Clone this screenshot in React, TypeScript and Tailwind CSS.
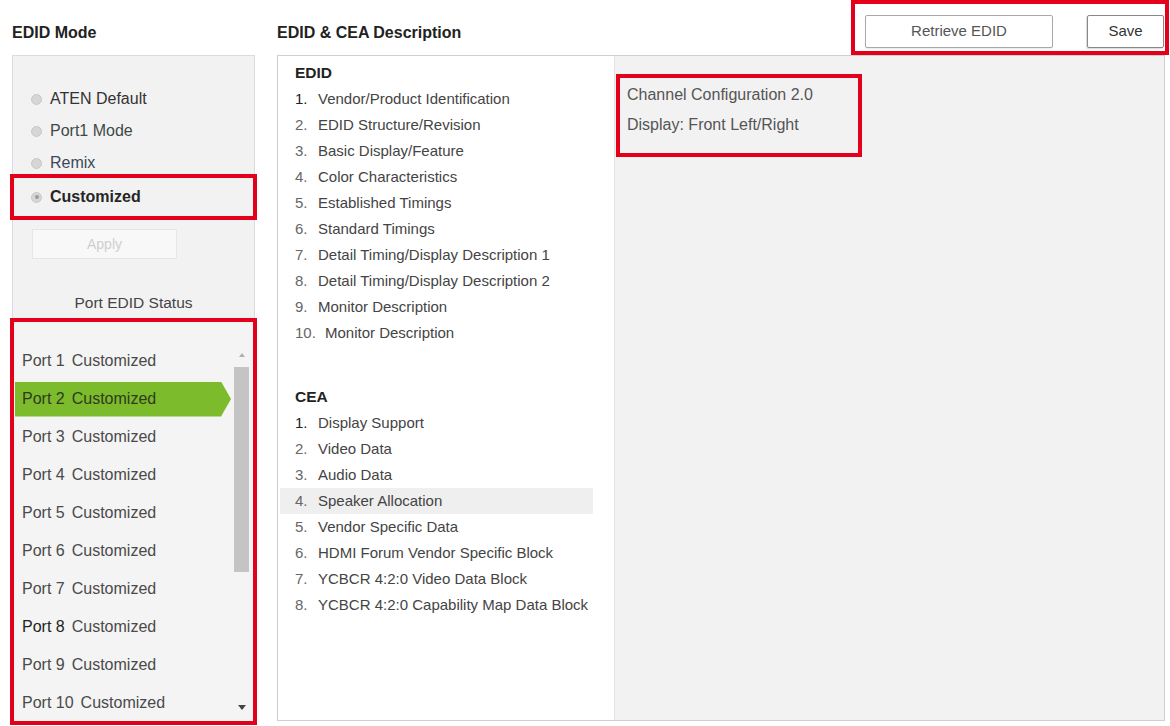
import React from "react";

const edidItems = [
  "Vendor/Product Identification",
  "EDID Structure/Revision",
  "Basic Display/Feature",
  "Color Characteristics",
  "Established Timings",
  "Standard Timings",
  "Detail Timing/Display Description 1",
  "Detail Timing/Display Description 2",
  "Monitor Description",
  "Monitor Description",
];

const ceaItems = [
  "Display Support",
  "Video Data",
  "Audio Data",
  "Speaker Allocation",
  "Vendor Specific Data",
  "HDMI Forum Vendor Specific Block",
  "YCBCR 4:2:0 Video Data Block",
  "YCBCR 4:2:0 Capability Map Data Block",
];

function Radio({ checked }: { checked?: boolean }) {
  return (
    <span className="w-[11px] h-[11px] rounded-full bg-[#d6d6d6] border border-[#c8c8c8] flex items-center justify-center mr-[8px] shrink-0">
      {checked ? <span className="w-[4px] h-[4px] rounded-full bg-[#9a9a9a]" /> : null}
    </span>
  );
}

function ListRow({ n, text, highlight, first }: { n: number; text: string; highlight?: boolean; first?: boolean }) {
  return (
    <div className={`h-[26px] flex items-center ml-[2px] w-[313px] pl-[15px] ${highlight ? "bg-[#efefef]" : ""}`}>
      <span className={`w-[23px] shrink-0 ${first ? "text-[#222]" : "text-[#666]"}`}>{n}.</span>
      <span className={`text-[#444] ${n === 10 ? "ml-[7px]" : ""}`}>{text}</span>
    </div>
  );
}

export default function App() {
  return (
    <div
      className="w-[1170px] h-[726px] bg-white overflow-hidden flex flex-col"
      style={{ fontFamily: '"Liberation Sans", Arial, sans-serif' }}
    >
      {/* Header */}
      <div className="h-[55px] flex shrink-0">
        <div className="w-[277px] pl-[12px] pt-[23px] text-[16px] leading-[20px] font-bold text-[#222]">EDID Mode</div>
        <div className="pt-[23px] text-[16px] leading-[20px] font-bold text-[#222]">EDID &amp; CEA Description</div>
        <div className="ml-auto mr-[1px] w-[318px] h-[55px] border-4 border-[#e2001a] flex pl-[10px] pt-[11px] pr-[1px]">
          <button className="w-[188px] h-[33px] bg-white border border-[#a9a9a9] rounded-[2px] text-[15px] text-[#555] shadow-[0_1px_1px_rgba(0,0,0,0.08)]">
            Retrieve EDID
          </button>
          <button className="ml-[34px] w-[77px] h-[33px] bg-white border border-[#888] rounded-[2px] text-[15px] text-[#333] shadow-[-1px_1px_1px_rgba(0,0,0,0.15)]">
            Save
          </button>
        </div>
      </div>

      {/* Body */}
      <div className="flex flex-1">
        {/* Left column */}
        <div className="w-[247px] ml-[10px] flex flex-col text-[16px] text-[#444]">
          <div className="mx-[2px] h-[263px] bg-[#f2f2f2] border border-b-0 border-[#dcdcdc] pt-[27px] flex flex-col">
            <div className="h-[32px] flex items-center pl-[18px]">
              <Radio />
              <span className="text-[#333]">ATEN Default</span>
            </div>
            <div className="h-[32px] flex items-center pl-[18px]">
              <Radio />
              <span className="text-[#3d4a48]">Port1 Mode</span>
            </div>
            <div className="h-[32px] flex items-center pl-[18px]">
              <Radio />
              <span className="text-[#3a4858]">Remix</span>
            </div>
            <div className="-mt-[5px] -mx-[3px] h-[46px] border-4 border-[#e2001a] flex items-center pl-[17px]">
              <Radio checked />
              <span className="font-bold text-[#262626]">Customized</span>
            </div>
            <div className="mt-[9px] ml-[19px] w-[145px] h-[30px] bg-[#f8f8f8] border border-[#e6e6e6] flex items-center justify-center text-[14px] text-[#cfcfcf]">
              Apply
            </div>
            <div className="mt-[34px] h-[20px] leading-[20px] text-center text-[15.5px] text-[#444]">Port EDID Status</div>
          </div>

          {/* Port list */}
          <div className="h-[407px] border-4 border-[#e2001a] bg-[#f4f4f4] flex">
            <div className="flex-1 pt-[20px]">
              {Array.from({ length: 10 }, (_, i) => i + 1).map((n) => (
                <div key={n} className="h-[38px] flex items-center">
                  <div
                    className={`h-[35px] w-[216px] ml-[1px] pl-[7px] flex items-center ${
                      n === 2 ? "bg-[#7cbb2b] [clip-path:polygon(0_0,calc(100%-10px)_0,100%_50%,calc(100%-10px)_100%,0_100%)]" : ""
                    }`}
                  >
                    <span className={n === 2 ? "text-[#2e3a20]" : n === 8 ? "text-[#222]" : "text-[#4a4a4a]"}>
                      Port {n}
                    </span>
                    <span className={`ml-[7px] ${n === 2 ? "text-[#2e3a20]" : "text-[#4a4a4a]"}`}>Customized</span>
                  </div>
                </div>
              ))}
            </div>
            <div className="w-[15px] mr-[4px] flex flex-col items-center pt-[31px] pb-[11px]">
              <span className="w-0 h-0 border-l-[3px] border-r-[3px] border-b-[4px] border-l-transparent border-r-transparent border-b-[#b0b0b0]" />
              <div className="mt-[10px] w-[15px] h-[205px] bg-[#c4c4c4]" />
              <div className="flex-1" />
              <span className="w-0 h-0 border-l-[4px] border-r-[4px] border-t-[5px] border-l-transparent border-r-transparent border-t-[#444]" />
            </div>
          </div>
        </div>

        {/* Middle panel */}
        <div className="ml-[20px] w-[888px] h-[666px] border border-[#cfcfcf] flex text-[15px]">
          <div className="w-[336px] bg-white pt-[4px]">
            <div className="h-[26px] flex items-center pl-[17px] font-bold text-[15.5px] text-[#222]">EDID</div>
            {edidItems.map((t, i) => (
              <ListRow key={i} n={i + 1} text={t} first={i === 0} />
            ))}
            <div className="mt-[38px] h-[26px] flex items-center pl-[17px] font-bold text-[15.5px] text-[#222]">CEA</div>
            {ceaItems.map((t, i) => (
              <ListRow key={i} n={i + 1} text={t} first={i === 0} highlight={i === 3} />
            ))}
          </div>
          <div className="flex-1 bg-[#f2f2f2] border-l border-[#e4e4e4] pt-[18px] pl-[1px]">
            <div className="w-[246px] h-[83px] border-4 border-[#e2001a] pt-[2px] pl-[7px] text-[16px] text-[#555]">
              <div className="h-[30px] flex items-center">Channel Configuration 2.0</div>
              <div className="h-[30px] flex items-center">Display: Front Left/Right</div>
            </div>
          </div>
        </div>
      </div>
    </div>
  );
}
